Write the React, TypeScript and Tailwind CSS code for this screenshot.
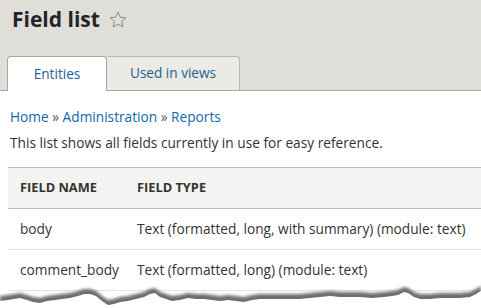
const font = { fontFamily: '"Open Sans", "DejaVu Sans", sans-serif' }

const rows = [
  { name: 'body', type: 'Text (formatted, long, with summary) (module: text)' },
  { name: 'comment_body', type: 'Text (formatted, long) (module: text)' },
]

function Star() {
  return (
    <svg width="20" height="20" viewBox="0 0 24 24" className="ml-[8px] mt-[1px]">
      <path
        d="M12 2.5l2.8 6.1 6.6.7-4.9 4.5 1.4 6.6L12 17.1l-5.9 3.3 1.4-6.6-4.9-4.5 6.6-.7z"
        fill="none"
        stroke="#8c8b86"
        strokeWidth="1.2"
        strokeLinejoin="round"
      />
    </svg>
  )
}

// jagged "torn paper" edge at the bottom of the screenshot
const torn =
  'M0 11 L8 10 L14 9 L20 8 L27 10 L33 12 L40 13 L47 11 L55 10 L62 9 L70 8 L78 6 L84 4 L90 4 L96 6 L102 11 L108 15 L114 14 L120 12 L128 11 L136 9 L144 7 L150 4 L155 3 L160 7 L166 9 L172 11 L180 10 L188 8 L196 9 L204 9 L212 10 L220 11 L228 10 L236 11 L244 12 L252 10 L260 9 L270 9 L280 9 L290 9 L300 9 L310 8 L320 7 L330 6 L340 7 L350 7 L360 7 L372 8 L384 7 L392 6 L398 5 L404 2 L408 3 L414 7 L420 9 L430 9 L440 8 L450 8 L460 8 L470 7 L476 4 L481 1 L481 30 L0 30 Z'

export default function App() {
  return (
    <div className="relative w-[481px] h-[308px] overflow-hidden bg-white text-[#333]" style={font}>
      {/* Header */}
      <div className="bg-[#dfded8] border-b border-[#a8a7a3]">
        <div className="flex items-center pl-[12px] pt-[5px]">
          <h1 className="text-[21px] leading-[28px] font-bold text-[#232429]">Field list</h1>
          <Star />
        </div>
        <div className="flex pl-[7px] mt-[23px]">
          <div className="w-[100px] h-[35px] -mb-px bg-white border border-b-0 border-[#a8a7a3] rounded-t-[4px] flex items-center justify-center text-[13.6px] text-[#1f5f93]">
            Entities
          </div>
          <div className="w-[133px] h-[34px] bg-[#ebeae5] border border-l-0 border-b-0 border-[#b9b8b3] rounded-tr-[4px] flex items-center justify-center text-[13.6px] text-[#1f5f93]">
            Used in views
          </div>
        </div>
      </div>

      {/* Content */}
      <div className="pt-[16px]">
        <div className="pl-[10px] text-[13.7px] leading-[20px] text-[#0d6aa8]">
          Home <span className="text-[#555]">»</span> Administration <span className="text-[#555]">»</span> Reports
        </div>
        <p className="pl-[10px] mt-[6px] text-[13.7px] leading-[20px]">
          This list shows all fields currently in use for easy reference.
        </p>

        <div className="ml-[8px] mt-[14px] text-[13.7px]">
          <div className="grid grid-cols-[117px_1fr] h-[42px] items-center bg-[#f3f3f1] border-y border-[#bfbebb] text-[12.8px] font-bold uppercase text-[#333]">
            <div className="pl-[12px]">Field name</div>
            <div className="pl-[12px]">Field type</div>
          </div>
          {rows.map((r) => (
            <div key={r.name} className="grid grid-cols-[117px_1fr] h-[41px] items-center border-b border-[#e4e3df]">
              <div className="pl-[12px] whitespace-nowrap">{r.name}</div>
              <div className="pl-[12px] whitespace-nowrap">{r.type}</div>
            </div>
          ))}
        </div>
      </div>

      {/* Torn edge */}
      <svg className="absolute left-0 bottom-0" width="481" height="24" viewBox="0 0 481 24">
        <defs>
          <filter id="blur" x="-5%" y="-50%" width="110%" height="200%">
            <feGaussianBlur stdDeviation="1.4" />
          </filter>
        </defs>
        <path d={torn} fill="#6e6e6e" filter="url(#blur)" transform="translate(0 1)" />
        <path d={torn} fill="#fff" transform="translate(0 6)" />
      </svg>
    </div>
  )
}
